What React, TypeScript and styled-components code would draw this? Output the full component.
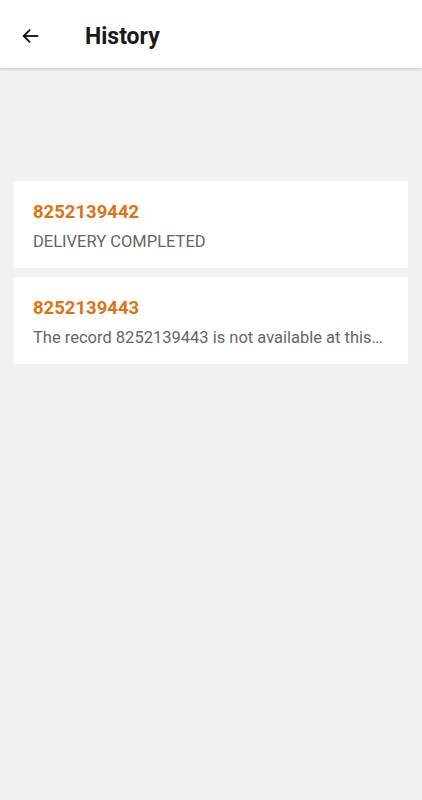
import styled, { createGlobalStyle } from 'styled-components';

const GlobalStyle = createGlobalStyle`
	html, body {
		margin: 0;
		padding: 0;
		background: #f1f1f1;
		font-family: Roboto, 'Noto Sans', sans-serif;
	}
`;

const Page = styled.div`
	min-height: 800px;
	background: #f1f1f1;
`;

const Header = styled.header`
	display: flex;
	align-items: center;
	height: 68px;
	box-sizing: border-box;
	padding: 4px 0 0 19px;
	background: #ffffff;
	box-shadow: 0 1px 3px rgba(0, 0, 0, 0.18);
`;

const BackButton = styled.button`
	display: flex;
	align-items: center;
	justify-content: center;
	border: none;
	background: transparent;
	padding: 0;
	width: 24px;
	height: 24px;
	color: #111;
`;

const Title = styled.h1`
	margin: 0 0 0 42px;
	font-size: 23px;
	font-weight: 700;
	color: #1a1a1a;
`;

const List = styled.div`
	display: flex;
	flex-direction: column;
	gap: 9px;
	padding: 113px 14px 0 14px;
`;

const Card = styled.div`
	background: #ffffff;
	height: 87px;
	padding: 19px 19px 0 19px;
	box-sizing: border-box;
`;

const RecordId = styled.div`
	font-size: 18.5px;
	font-weight: 700;
	color: #e0720f;
	line-height: 24px;
`;

const Status = styled.div`
	margin-top: 6px;
	font-size: 16.5px;
	color: #666666;
	line-height: 23px;
	white-space: nowrap;
`;

const records = [
	{ id: '8252139442', text: 'DELIVERY COMPLETED' },
	{ id: '8252139443', text: 'The record 8252139443 is not available at this…' },
];

export default function App() {
	return (
		<Page>
			<GlobalStyle />
			<Header>
				<BackButton aria-label='Back'>
					<svg width='22' height='22' viewBox='0 0 24 24' fill='none' stroke='currentColor' strokeWidth='2'>
						<path d='M20 12H4.5' />
						<path d='M11 5l-7 7 7 7' />
					</svg>
				</BackButton>
				<Title>History</Title>
			</Header>
			<List>
				{records.map((r) => (
					<Card key={r.id}>
						<RecordId>{r.id}</RecordId>
						<Status>{r.text}</Status>
					</Card>
				))}
			</List>
		</Page>
	);
}
